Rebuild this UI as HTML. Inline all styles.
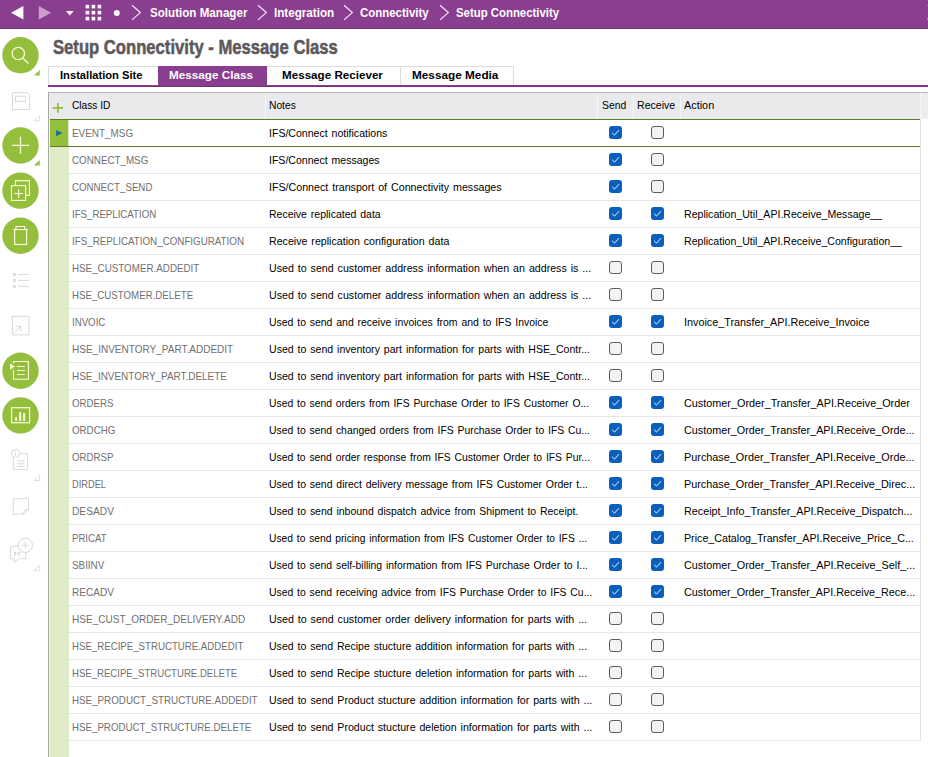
<!DOCTYPE html>
<html><head><meta charset="utf-8"><title>Setup Connectivity</title>
<style>
html,body{margin:0;padding:0;}
body{width:928px;height:757px;position:relative;overflow:hidden;background:#fff;font-family:"Liberation Sans",sans-serif;font-size:11px;color:#000;}
.abs{position:absolute;}
.t{position:absolute;white-space:nowrap;transform-origin:0 50%;line-height:14px;height:14px;}
#top{left:0;top:0;width:928px;height:28px;background:#8a3e8f;border-bottom:1px solid #713676;}
.bc{color:#fff;font-weight:bold;font-size:13px;top:6px;line-height:14px;}
#title{left:53px;top:33.5px;font-size:20px;font-weight:bold;color:#5d595b;line-height:26px;height:26px;transform:scaleX(0.832);-webkit-text-stroke:0.55px #5d595b;}
.tab{position:absolute;top:66px;height:19px;box-sizing:border-box;border-top:1px solid #dcdcdc;border-left:1px solid #dcdcdc;background:#fff;}
.tabt{font-weight:bold;font-size:11px;top:2px;}
#pl{left:48px;top:85px;width:880px;height:1px;background:#8a3e8f;border-bottom:1px solid #6f3474;}
#hdr{left:50px;top:93px;width:870px;height:26px;background:#e9eaec;}
.ht{font-size:11px;top:98px;color:#000;}
.row{position:absolute;left:68px;width:852px;height:27px;border-bottom:1px solid #e6e6e6;box-sizing:border-box;}
.cid{color:#707070;}
.cb{position:absolute;width:13px;height:13px;box-sizing:border-box;border-radius:3px;}
.cb.on{background:#0a5fbd;}
.cb.off{background:#f3f3f3;border:1px solid #5c5c5c;}
</style></head>
<body>
<div class="abs" id="top"></div>
<svg class="abs" style="left:0;top:0" width="150" height="28" viewBox="0 0 150 28">
<polygon points="11,12.7 23.4,6 23.4,19.4" fill="#fff"/>
<polygon points="51,12.7 38.8,6 38.8,19.4" fill="#c9a0cc"/>
<polygon points="66,11 73.6,11 69.8,15.4" fill="#fff"/>
<g fill="#fff">
<rect x="85.6" y="4.8" width="3.6" height="3.6"/><rect x="91.6" y="4.8" width="3.6" height="3.6"/><rect x="97.6" y="4.8" width="3.6" height="3.6"/>
<rect x="85.6" y="10.8" width="3.6" height="3.6"/><rect x="91.6" y="10.8" width="3.6" height="3.6"/><rect x="97.6" y="10.8" width="3.6" height="3.6"/>
<rect x="85.6" y="16.8" width="3.6" height="3.6"/><rect x="91.6" y="16.8" width="3.6" height="3.6"/><rect x="97.6" y="16.8" width="3.6" height="3.6"/>
</g>
<circle cx="116.8" cy="12.9" r="3" fill="#fff"/>
</svg>
<div class="abs" style="left:926.5px;top:4.8px;width:2px;height:1.6px;background:#b576ba"></div><div class="abs" style="left:926.5px;top:18px;width:2px;height:1.8px;background:#b576ba"></div>
<svg class="abs" style="left:131.3px;top:4px" width="12" height="18" viewBox="0 0 12 18"><polyline points="1,1.3 9.3,8.6 1,15.9" fill="none" stroke="#f4e6f6" stroke-width="1.2"/></svg>
<svg class="abs" style="left:256.5px;top:4px" width="12" height="18" viewBox="0 0 12 18"><polyline points="1,1.3 9.3,8.6 1,15.9" fill="none" stroke="#f4e6f6" stroke-width="1.2"/></svg>
<svg class="abs" style="left:343.4px;top:4px" width="12" height="18" viewBox="0 0 12 18"><polyline points="1,1.3 9.3,8.6 1,15.9" fill="none" stroke="#f4e6f6" stroke-width="1.2"/></svg>
<svg class="abs" style="left:438.6px;top:4px" width="12" height="18" viewBox="0 0 12 18"><polyline points="1,1.3 9.3,8.6 1,15.9" fill="none" stroke="#f4e6f6" stroke-width="1.2"/></svg>
<div class="t bc" style="left:149.6px;transform:scaleX(0.8931)">Solution Manager</div>
<div class="t bc" style="left:273.59999999999997px;transform:scaleX(0.8962)">Integration</div>
<div class="t bc" style="left:360.4px;transform:scaleX(0.8806)">Connectivity</div>
<div class="t bc" style="left:456.29999999999995px;transform:scaleX(0.8756)">Setup Connectivity</div>
<div class="t" id="title">Setup Connectivity - Message Class</div>
<div class="tab" style="left:48px;width:110px"></div>
<div class="tab" style="left:158px;width:109px;background:#8a3e8f;border-color:#8a3e8f"></div>
<div class="tab" style="left:267px;width:133px;border-left:none"></div>
<div class="tab" style="left:400px;width:114px;border-right:1px solid #dcdcdc"></div>
<div class="t tabt" style="left:59.8px;top:68px;color:#000;transform:scaleX(1.0148)">Installation Site</div>
<div class="t tabt" style="left:168.8px;top:68px;color:#fff;transform:scaleX(1.0648)">Message Class</div>
<div class="t tabt" style="left:281.6px;top:68px;color:#000;transform:scaleX(1.0576)">Message Reciever</div>
<div class="t tabt" style="left:411.90000000000003px;top:68px;color:#000;transform:scaleX(1.0706)">Message Media</div>
<div class="abs" id="pl"></div>
<div class="abs" style="left:48px;top:92px;width:880px;height:1px;background:#b4b4b4"></div>
<div class="abs" style="left:48px;top:92px;width:1px;height:665px;background:#a8a8a8"></div>
<div class="abs" id="hdr"></div>
<div class="abs" style="left:920px;top:93px;width:8px;height:26px;background:#ededef;"></div>
<div class="abs" style="left:920px;top:93px;width:1px;height:26px;background:#f8f8f8;"></div>
<div class="abs" style="left:920px;top:119px;width:1px;height:622px;background:#e2e2e2;"></div>
<div class="abs" style="left:49px;top:93px;width:1px;height:664px;background:#f1f1f1"></div>
<div class="abs" style="left:50px;top:119px;width:18.5px;height:638px;background:#e0ecc8"></div>
<div class="abs" style="left:265px;top:94px;width:1px;height:25px;background:#f6f6f6"></div>
<div class="abs" style="left:597px;top:94px;width:1px;height:25px;background:#f6f6f6"></div>
<div class="abs" style="left:633px;top:94px;width:1px;height:25px;background:#f6f6f6"></div>
<div class="abs" style="left:680px;top:94px;width:1px;height:25px;background:#f6f6f6"></div>
<svg class="abs" style="left:52px;top:102px" width="12" height="12" viewBox="0 0 12 12"><path d="M0.8 5.9H11M5.9 1V10.8" stroke="#93bf3d" stroke-width="1.8" fill="none"/></svg>
<div class="t ht" style="left:71.6px;transform:scaleX(0.9215)">Class ID</div>
<div class="t ht" style="left:268.7px;transform:scaleX(0.9322)">Notes</div>
<div class="t ht" style="left:601.8px;transform:scaleX(0.9415)">Send</div>
<div class="t ht" style="left:636.8px;transform:scaleX(0.961)">Receive</div>
<div class="t ht" style="left:683.5999999999999px;transform:scaleX(0.9876)">Action</div>
<div class="row" style="top:120px"></div>
<div class="t cid" style="left:71.7px;top:126px;transform:scaleX(0.9004)">EVENT_MSG</div>
<div class="t" style="left:268.5px;top:126px;word-spacing:1px;transform:scaleX(0.9595)">IFS/Connect notifications</div>
<div class="cb on" style="left:609px;top:126px"><svg width="13" height="13" viewBox="0 0 13 13" style="display:block"><polyline points="3.2,6.8 5.5,9.1 10,4.2" fill="none" stroke="#eaf3ff" stroke-width="1"/></svg></div>
<div class="cb off" style="left:651px;top:126px"></div>
<div class="row" style="top:147px"></div>
<div class="t cid" style="left:71.7px;top:153px;transform:scaleX(0.8917)">CONNECT_MSG</div>
<div class="t" style="left:268.5px;top:153px;word-spacing:1px;transform:scaleX(0.9589)">IFS/Connect messages</div>
<div class="cb on" style="left:609px;top:153px"><svg width="13" height="13" viewBox="0 0 13 13" style="display:block"><polyline points="3.2,6.8 5.5,9.1 10,4.2" fill="none" stroke="#eaf3ff" stroke-width="1"/></svg></div>
<div class="cb off" style="left:651px;top:153px"></div>
<div class="row" style="top:174px"></div>
<div class="t cid" style="left:71.7px;top:180px;transform:scaleX(0.8828)">CONNECT_SEND</div>
<div class="t" style="left:268.5px;top:180px;word-spacing:1px;transform:scaleX(0.9692)">IFS/Connect transport of Connectivity messages</div>
<div class="cb on" style="left:609px;top:180px"><svg width="13" height="13" viewBox="0 0 13 13" style="display:block"><polyline points="3.2,6.8 5.5,9.1 10,4.2" fill="none" stroke="#eaf3ff" stroke-width="1"/></svg></div>
<div class="cb off" style="left:651px;top:180px"></div>
<div class="row" style="top:201px"></div>
<div class="t cid" style="left:71.7px;top:207px;transform:scaleX(0.8792)">IFS_REPLICATION</div>
<div class="t" style="left:268.5px;top:207px;word-spacing:1px;transform:scaleX(0.955)">Receive replicated data</div>
<div class="t" style="left:683.6px;top:207px;transform:scaleX(0.9614)">Replication_Util_API.Receive_Message__</div>
<div class="cb on" style="left:609px;top:207px"><svg width="13" height="13" viewBox="0 0 13 13" style="display:block"><polyline points="3.2,6.8 5.5,9.1 10,4.2" fill="none" stroke="#eaf3ff" stroke-width="1"/></svg></div>
<div class="cb on" style="left:651px;top:207px"><svg width="13" height="13" viewBox="0 0 13 13" style="display:block"><polyline points="3.2,6.8 5.5,9.1 10,4.2" fill="none" stroke="#eaf3ff" stroke-width="1"/></svg></div>
<div class="row" style="top:228px"></div>
<div class="t cid" style="left:71.7px;top:234px;transform:scaleX(0.8896)">IFS_REPLICATION_CONFIGURATION</div>
<div class="t" style="left:268.5px;top:234px;word-spacing:1px;transform:scaleX(0.967)">Receive replication configuration data</div>
<div class="t" style="left:683.6px;top:234px;transform:scaleX(0.9609)">Replication_Util_API.Receive_Configuration__</div>
<div class="cb on" style="left:609px;top:234px"><svg width="13" height="13" viewBox="0 0 13 13" style="display:block"><polyline points="3.2,6.8 5.5,9.1 10,4.2" fill="none" stroke="#eaf3ff" stroke-width="1"/></svg></div>
<div class="cb on" style="left:651px;top:234px"><svg width="13" height="13" viewBox="0 0 13 13" style="display:block"><polyline points="3.2,6.8 5.5,9.1 10,4.2" fill="none" stroke="#eaf3ff" stroke-width="1"/></svg></div>
<div class="row" style="top:255px"></div>
<div class="t cid" style="left:71.7px;top:261px;transform:scaleX(0.8913)">HSE_CUSTOMER.ADDEDIT</div>
<div class="t" style="left:268.5px;top:261px;word-spacing:1px;transform:scaleX(0.968)">Used to send customer address information when an address is ...</div>
<div class="cb off" style="left:609px;top:261px"></div>
<div class="cb off" style="left:651px;top:261px"></div>
<div class="row" style="top:282px"></div>
<div class="t cid" style="left:71.7px;top:288px;transform:scaleX(0.8818)">HSE_CUSTOMER.DELETE</div>
<div class="t" style="left:268.5px;top:288px;word-spacing:1px;transform:scaleX(0.968)">Used to send customer address information when an address is ...</div>
<div class="cb off" style="left:609px;top:288px"></div>
<div class="cb off" style="left:651px;top:288px"></div>
<div class="row" style="top:309px"></div>
<div class="t cid" style="left:71.7px;top:315px;transform:scaleX(0.8785)">INVOIC</div>
<div class="t" style="left:268.5px;top:315px;word-spacing:1px;transform:scaleX(0.9493)">Used to send and receive invoices from and to IFS Invoice</div>
<div class="t" style="left:683.6px;top:315px;transform:scaleX(0.9813)">Invoice_Transfer_API.Receive_Invoice</div>
<div class="cb on" style="left:609px;top:315px"><svg width="13" height="13" viewBox="0 0 13 13" style="display:block"><polyline points="3.2,6.8 5.5,9.1 10,4.2" fill="none" stroke="#eaf3ff" stroke-width="1"/></svg></div>
<div class="cb on" style="left:651px;top:315px"><svg width="13" height="13" viewBox="0 0 13 13" style="display:block"><polyline points="3.2,6.8 5.5,9.1 10,4.2" fill="none" stroke="#eaf3ff" stroke-width="1"/></svg></div>
<div class="row" style="top:336px"></div>
<div class="t cid" style="left:71.7px;top:342px;transform:scaleX(0.9103)">HSE_INVENTORY_PART.ADDEDIT</div>
<div class="t" style="left:268.5px;top:342px;word-spacing:1px;transform:scaleX(0.9603)">Used to send inventory part information for parts with HSE_Contr...</div>
<div class="cb off" style="left:609px;top:342px"></div>
<div class="cb off" style="left:651px;top:342px"></div>
<div class="row" style="top:363px"></div>
<div class="t cid" style="left:71.7px;top:369px;transform:scaleX(0.9027)">HSE_INVENTORY_PART.DELETE</div>
<div class="t" style="left:268.5px;top:369px;word-spacing:1px;transform:scaleX(0.9603)">Used to send inventory part information for parts with HSE_Contr...</div>
<div class="cb off" style="left:609px;top:369px"></div>
<div class="cb off" style="left:651px;top:369px"></div>
<div class="row" style="top:390px"></div>
<div class="t cid" style="left:71.7px;top:396px;transform:scaleX(0.8818)">ORDERS</div>
<div class="t" style="left:268.5px;top:396px;word-spacing:1px;transform:scaleX(0.9417)">Used to send orders from IFS Purchase Order to IFS Customer O...</div>
<div class="t" style="left:683.6px;top:396px;transform:scaleX(0.9844)">Customer_Order_Transfer_API.Receive_Order</div>
<div class="cb on" style="left:609px;top:396px"><svg width="13" height="13" viewBox="0 0 13 13" style="display:block"><polyline points="3.2,6.8 5.5,9.1 10,4.2" fill="none" stroke="#eaf3ff" stroke-width="1"/></svg></div>
<div class="cb on" style="left:651px;top:396px"><svg width="13" height="13" viewBox="0 0 13 13" style="display:block"><polyline points="3.2,6.8 5.5,9.1 10,4.2" fill="none" stroke="#eaf3ff" stroke-width="1"/></svg></div>
<div class="row" style="top:417px"></div>
<div class="t cid" style="left:71.7px;top:423px;transform:scaleX(0.8857)">ORDCHG</div>
<div class="t" style="left:268.5px;top:423px;word-spacing:1px;transform:scaleX(0.9443)">Used to send changed orders from IFS Purchase Order to IFS Cu...</div>
<div class="t" style="left:683.6px;top:423px;transform:scaleX(0.981)">Customer_Order_Transfer_API.Receive_Orde...</div>
<div class="cb on" style="left:609px;top:423px"><svg width="13" height="13" viewBox="0 0 13 13" style="display:block"><polyline points="3.2,6.8 5.5,9.1 10,4.2" fill="none" stroke="#eaf3ff" stroke-width="1"/></svg></div>
<div class="cb on" style="left:651px;top:423px"><svg width="13" height="13" viewBox="0 0 13 13" style="display:block"><polyline points="3.2,6.8 5.5,9.1 10,4.2" fill="none" stroke="#eaf3ff" stroke-width="1"/></svg></div>
<div class="row" style="top:444px"></div>
<div class="t cid" style="left:71.7px;top:450px;transform:scaleX(0.8818)">ORDRSP</div>
<div class="t" style="left:268.5px;top:450px;word-spacing:1px;transform:scaleX(0.941)">Used to send order response from IFS Customer Order to IFS Pur...</div>
<div class="t" style="left:683.6px;top:450px;transform:scaleX(0.986)">Purchase_Order_Transfer_API.Receive_Orde...</div>
<div class="cb on" style="left:609px;top:450px"><svg width="13" height="13" viewBox="0 0 13 13" style="display:block"><polyline points="3.2,6.8 5.5,9.1 10,4.2" fill="none" stroke="#eaf3ff" stroke-width="1"/></svg></div>
<div class="cb on" style="left:651px;top:450px"><svg width="13" height="13" viewBox="0 0 13 13" style="display:block"><polyline points="3.2,6.8 5.5,9.1 10,4.2" fill="none" stroke="#eaf3ff" stroke-width="1"/></svg></div>
<div class="row" style="top:471px"></div>
<div class="t cid" style="left:71.7px;top:477px;transform:scaleX(0.8428)">DIRDEL</div>
<div class="t" style="left:268.5px;top:477px;word-spacing:1px;transform:scaleX(0.9498)">Used to send direct delivery message from IFS Customer Order t...</div>
<div class="t" style="left:683.6px;top:477px;transform:scaleX(0.9839)">Purchase_Order_Transfer_API.Receive_Direc...</div>
<div class="cb on" style="left:609px;top:477px"><svg width="13" height="13" viewBox="0 0 13 13" style="display:block"><polyline points="3.2,6.8 5.5,9.1 10,4.2" fill="none" stroke="#eaf3ff" stroke-width="1"/></svg></div>
<div class="cb on" style="left:651px;top:477px"><svg width="13" height="13" viewBox="0 0 13 13" style="display:block"><polyline points="3.2,6.8 5.5,9.1 10,4.2" fill="none" stroke="#eaf3ff" stroke-width="1"/></svg></div>
<div class="row" style="top:498px"></div>
<div class="t cid" style="left:71.7px;top:504px;transform:scaleX(0.9282)">DESADV</div>
<div class="t" style="left:268.5px;top:504px;word-spacing:1px;transform:scaleX(0.9516)">Used to send inbound dispatch advice from Shipment to Receipt.</div>
<div class="t" style="left:683.6px;top:504px;transform:scaleX(0.9796)">Receipt_Info_Transfer_API.Receive_Dispatch...</div>
<div class="cb on" style="left:609px;top:504px"><svg width="13" height="13" viewBox="0 0 13 13" style="display:block"><polyline points="3.2,6.8 5.5,9.1 10,4.2" fill="none" stroke="#eaf3ff" stroke-width="1"/></svg></div>
<div class="cb on" style="left:651px;top:504px"><svg width="13" height="13" viewBox="0 0 13 13" style="display:block"><polyline points="3.2,6.8 5.5,9.1 10,4.2" fill="none" stroke="#eaf3ff" stroke-width="1"/></svg></div>
<div class="row" style="top:525px"></div>
<div class="t cid" style="left:71.7px;top:531px;transform:scaleX(0.8727)">PRICAT</div>
<div class="t" style="left:268.5px;top:531px;word-spacing:1px;transform:scaleX(0.9342)">Used to send pricing information from IFS Customer Order to IFS ...</div>
<div class="t" style="left:683.6px;top:531px;transform:scaleX(0.9704)">Price_Catalog_Transfer_API.Receive_Price_C...</div>
<div class="cb on" style="left:609px;top:531px"><svg width="13" height="13" viewBox="0 0 13 13" style="display:block"><polyline points="3.2,6.8 5.5,9.1 10,4.2" fill="none" stroke="#eaf3ff" stroke-width="1"/></svg></div>
<div class="cb on" style="left:651px;top:531px"><svg width="13" height="13" viewBox="0 0 13 13" style="display:block"><polyline points="3.2,6.8 5.5,9.1 10,4.2" fill="none" stroke="#eaf3ff" stroke-width="1"/></svg></div>
<div class="row" style="top:552px"></div>
<div class="t cid" style="left:71.7px;top:558px;transform:scaleX(0.8953)">SBIINV</div>
<div class="t" style="left:268.5px;top:558px;word-spacing:1px;transform:scaleX(0.9446)">Used to send self-billing information from IFS Purchase Order to I...</div>
<div class="t" style="left:683.6px;top:558px;transform:scaleX(0.9814)">Customer_Order_Transfer_API.Receive_Self_...</div>
<div class="cb on" style="left:609px;top:558px"><svg width="13" height="13" viewBox="0 0 13 13" style="display:block"><polyline points="3.2,6.8 5.5,9.1 10,4.2" fill="none" stroke="#eaf3ff" stroke-width="1"/></svg></div>
<div class="cb on" style="left:651px;top:558px"><svg width="13" height="13" viewBox="0 0 13 13" style="display:block"><polyline points="3.2,6.8 5.5,9.1 10,4.2" fill="none" stroke="#eaf3ff" stroke-width="1"/></svg></div>
<div class="row" style="top:579px"></div>
<div class="t cid" style="left:71.7px;top:585px;transform:scaleX(0.9162)">RECADV</div>
<div class="t" style="left:268.5px;top:585px;word-spacing:1px;transform:scaleX(0.9443)">Used to send receiving advice from IFS Purchase Order to IFS Cu...</div>
<div class="t" style="left:683.6px;top:585px;transform:scaleX(0.9788)">Customer_Order_Transfer_API.Receive_Rece...</div>
<div class="cb on" style="left:609px;top:585px"><svg width="13" height="13" viewBox="0 0 13 13" style="display:block"><polyline points="3.2,6.8 5.5,9.1 10,4.2" fill="none" stroke="#eaf3ff" stroke-width="1"/></svg></div>
<div class="cb on" style="left:651px;top:585px"><svg width="13" height="13" viewBox="0 0 13 13" style="display:block"><polyline points="3.2,6.8 5.5,9.1 10,4.2" fill="none" stroke="#eaf3ff" stroke-width="1"/></svg></div>
<div class="row" style="top:606px"></div>
<div class="t cid" style="left:71.7px;top:612px;transform:scaleX(0.9129)">HSE_CUST_ORDER_DELIVERY.ADD</div>
<div class="t" style="left:268.5px;top:612px;word-spacing:1px;transform:scaleX(0.9682)">Used to send customer order delivery information for parts with ...</div>
<div class="cb off" style="left:609px;top:612px"></div>
<div class="cb off" style="left:651px;top:612px"></div>
<div class="row" style="top:633px"></div>
<div class="t cid" style="left:71.7px;top:639px;transform:scaleX(0.8785)">HSE_RECIPE_STRUCTURE.ADDEDIT</div>
<div class="t" style="left:268.5px;top:639px;word-spacing:1px;transform:scaleX(0.9593)">Used to send Recipe stucture addition information for parts with ...</div>
<div class="cb off" style="left:609px;top:639px"></div>
<div class="cb off" style="left:651px;top:639px"></div>
<div class="row" style="top:660px"></div>
<div class="t cid" style="left:71.7px;top:666px;transform:scaleX(0.8718)">HSE_RECIPE_STRUCTURE.DELETE</div>
<div class="t" style="left:268.5px;top:666px;word-spacing:1px;transform:scaleX(0.9593)">Used to send Recipe stucture deletion information for parts with ...</div>
<div class="cb off" style="left:609px;top:666px"></div>
<div class="cb off" style="left:651px;top:666px"></div>
<div class="row" style="top:687px"></div>
<div class="t cid" style="left:71.7px;top:693px;transform:scaleX(0.8905)">HSE_PRODUCT_STRUCTURE.ADDEDIT</div>
<div class="t" style="left:268.5px;top:693px;word-spacing:1px;transform:scaleX(0.9643)">Used to send Product stucture addition information for parts with ...</div>
<div class="cb off" style="left:609px;top:693px"></div>
<div class="cb off" style="left:651px;top:693px"></div>
<div class="row" style="top:714px"></div>
<div class="t cid" style="left:71.7px;top:720px;transform:scaleX(0.8836)">HSE_PRODUCT_STRUCTURE.DELETE</div>
<div class="t" style="left:268.5px;top:720px;word-spacing:1px;transform:scaleX(0.9643)">Used to send Product stucture deletion information for parts with ...</div>
<div class="cb off" style="left:609px;top:720px"></div>
<div class="cb off" style="left:651px;top:720px"></div>
<div class="abs" style="left:50px;top:119px;width:18px;height:27px;background:#93bf3d"></div>
<div class="abs" style="left:50px;top:119px;width:870px;height:1px;background:#5f7d2a"></div>
<div class="abs" style="left:50px;top:146px;width:870px;height:1px;background:#5f7d2a"></div>
<svg class="abs" style="left:55px;top:129px" width="9" height="9" viewBox="0 0 9 9"><polygon points="1.1,1 7.4,4.1 1.1,7.2" fill="#1a6e8e"/></svg>
<svg class="abs" style="left:0;top:28px" width="48" height="729" viewBox="0 28 48 729">
<circle cx="20.5" cy="55.3" r="18.2" fill="#93bf3d"/><polygon points="39.7,70.0 39.7,75.6 34,75.6" fill="#93bf3d"/>
<g fill="none" stroke="#fbfbd8" stroke-width="1.35"><circle cx="18.3" cy="53.5" r="6.2"/><path d="M22.8 58 L28.4 63.6"/></g>
<g fill="none" stroke="#d9d9d9" stroke-width="1"><path d="M12.5 92.7 H26.8 L29.6 95.5 V109.5 H12.5 Z"/><rect x="15.5" y="96.2" width="10.2" height="5.2"/></g>
<polygon points="39.7,115.2 39.7,120.8 34,120.8" fill="none" stroke="#d9d9d9" stroke-width="0.8"/>
<circle cx="20.5" cy="145.5" r="18.2" fill="#93bf3d"/><polygon points="39.7,160.0 39.7,165.6 34,165.6" fill="#93bf3d"/>
<path d="M12 145.3 H29 M20.5 136.8 V153.8" stroke="#fbfbd8" stroke-width="1.3" fill="none"/>
<circle cx="20.5" cy="190.6" r="18.2" fill="#93bf3d"/>
<g fill="none" stroke="#fbfbd8" stroke-width="1.15"><path d="M15.5 185.2 V180.6 H29.4 V195.3 H26"/><rect x="11.5" y="185.6" width="14.1" height="14.8"/><path d="M14.2 193.5 H23 M18.6 189.2 V197.9"/></g>
<circle cx="20.5" cy="235.7" r="18.2" fill="#93bf3d"/>
<rect x="16" y="226.6" width="8.6" height="2.6" fill="#7ea62f"/><g fill="none" stroke="#fbfbd8" stroke-width="1.15"><rect x="14.6" y="229.5" width="12" height="15"/><path d="M13.3 229.5 H27.9 M16 229.4 V226.6 H24.7 V229.4"/></g>
<rect x="13" y="273.0" width="2.8" height="2.8" fill="#d9d9d9"/><path d="M18 274.4 H29" stroke="#d9d9d9" stroke-width="1"/>
<rect x="13" y="279.0" width="2.8" height="2.8" fill="#d9d9d9"/><path d="M18 280.4 H29" stroke="#d9d9d9" stroke-width="1"/>
<rect x="13" y="285.1" width="2.8" height="2.8" fill="#d9d9d9"/><path d="M18 286.5 H29" stroke="#d9d9d9" stroke-width="1"/>
<g fill="none" stroke="#d9d9d9" stroke-width="1"><rect x="12.3" y="316.3" width="16.6" height="18.6"/><path d="M13.2 333.8 L20.6 326.4 M15.6 326.3 H20.7 V331.4"/></g>
<circle cx="20.5" cy="370.7" r="18.2" fill="#93bf3d"/>
<g fill="none" stroke="#fbfbd8" stroke-width="1.15"><path d="M13.5 363.4 V361.5 H28.4 V379.2 H13.5 V369.8"/><path d="M17 366.5 H24.8 M17 370.5 H24.8 M17 374.5 H24.8"/></g><polygon points="10,363.5 10,369.7 15,366.6" fill="#fbfbd8"/>
<circle cx="20.5" cy="415.4" r="18.2" fill="#93bf3d"/>
<rect x="11.6" y="407.7" width="18" height="15" fill="none" stroke="#fbfbd8" stroke-width="1.25"/><g fill="#fbfbd8"><rect x="15.1" y="417" width="2" height="4"/><rect x="19.1" y="412" width="2.1" height="9"/><rect x="23.1" y="413.1" width="2.1" height="7.9"/></g>
<g fill="none" stroke="#d9d9d9" stroke-width="1"><path d="M19.6 453.4 H27.7 V469.4 H13.3 V457.4"/><circle cx="15.6" cy="453.5" r="4"/><path d="M17 461 H24.5 M17 463.8 H24.5 M17 466.5 H24.5"/><path d="M15.6 452.8 V455.8 M15.6 451 V451.8"/></g>
<polygon points="39.7,475.0 39.7,480.6 34,480.6" fill="none" stroke="#d9d9d9" stroke-width="0.8"/>
<g fill="none" stroke="#d9d9d9" stroke-width="1"><path d="M13.3 498.7 H28.5 V509.2 L23.6 514.1 H13.3 Z"/><path d="M28.5 509.2 L24.4 510 L23.6 514.1"/></g>
<g fill="none" stroke="#d9d9d9" stroke-width="1"><path d="M18.4 546.3 H10.6 V558.8 H14.4 V562.4 L18.4 558.8 H25.8 V552.4"/><circle cx="25.4" cy="545.4" r="7.1"/><path d="M21.7 545.4 H29.1 M25.4 541.7 V549.1"/></g>
<g fill="#d9d9d9"><path d="M14 551.8 h2.4 v2.2 l-1.6 2.2 h-0.9 l0.9 -2.2 h-0.8z"/><path d="M17.8 551.8 h2.4 v2.2 l-1.6 2.2 h-0.9 l0.9 -2.2 h-0.8z"/></g>
<polygon points="39.7,565.0 39.7,570.6 34,570.6" fill="none" stroke="#d9d9d9" stroke-width="0.8"/>
</svg>
</body></html>
